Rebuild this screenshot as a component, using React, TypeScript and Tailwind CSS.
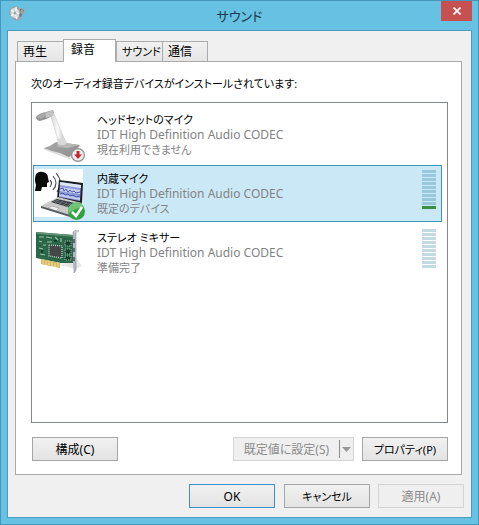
import { useState, type ReactNode } from "react";

function SpeakerIcon() {
  return (
    <svg width="16" height="16" viewBox="0 0 16 16" aria-hidden="true">
      <path d="M1 4 4 1l4-1 2 2 3 0 3 2-1 3-2 2-1 4-4 2-4-2-3-4z" fill="#9ea4a9" />
      <ellipse cx="6" cy="7" rx="5" ry="6" fill="#d4d7da" stroke="#8b9297" strokeWidth=".8" transform="rotate(-20 6 7)" />
      <path d="M2 4l4 3-4 3M7 1v5l3 2M6 8l2 5" stroke="#f7f7f7" strokeWidth="1.4" fill="none" />
      <path d="M11 3l4 1-1 2-3-1zM11 7l2 1-1 3-2-1z" fill="#6d757b" />
      <path d="M12 4.5l2 .5" stroke="#d7c0ba" />
      <circle cx="6" cy="7" r="1.500" fill="#9aa2a7" />
    </svg>
  );
}

function HeadsetMicIcon() {
  return (
    <svg width="52" height="52" viewBox="0 0 52 52" aria-hidden="true">
      <defs>
        <linearGradient id="arm" x1="0" x2="1">
          <stop offset="0" stopColor="#cfcfcf" />
          <stop offset=".5" stopColor="#fbfbfb" />
          <stop offset="1" stopColor="#b5b5b5" />
        </linearGradient>
        <linearGradient id="base" x1="0" x2="1" y2="1">
          <stop offset="0" stopColor="#a9a9a9" />
          <stop offset="1" stopColor="#8d8d8d" />
        </linearGradient>
      </defs>
      <path d="M9 38l2 2 24 9 3-1 8-12z" fill="#dedede" />
      <path d="M10 38q7-2 12-6l10 1 14 2-6 8-5 4-9-4-8-2z" fill="url(#base)" />
      <path d="M23 33l9 0 12 2-10 3-10-1z" fill="#b8b8b8" />
      <path d="M16 4l4 0 12 29q-4 3-7 0z" fill="url(#arm)" stroke="#c9c9c9" strokeWidth=".6" />
      <path d="M23 28q4 2 7-1l3 6q-4 4-9 1z" fill="#d9d9d9" />
      <path d="M2 7Q5 3 12 2l7-2 1 3-2 3Q12 10 6 11q-4-1-4-4z" fill="#929292" />
      <path d="M11 3l8-3 1 3-2 3-6 2z" fill="#c2c2c2" />
      <path d="M3 7q3-3 7-4l2 3-5 3z" fill="#aaaaaa" />
      <circle cx="44" cy="45" r="6.400" fill="#f0f0f0" stroke="#8f8f8f" strokeWidth="1.200" />
      <path d="M42.500 41h3v3.500h2.500l-4 4.500-4-4.500h2.500z" fill="#c6272f" />
    </svg>
  );
}

function LaptopMicIcon() {
  return (
    <svg width="52" height="52" viewBox="0 0 52 52" aria-hidden="true">
      <path d="M0 0h49v48H0z" fill="#fff" />
      <path d="M2 5Q5 2 9 3q5 1 5 6l1 4-2 1 0 4-5 0-1 4-6 0 1-6Q0 11 2 5z" fill="#0a0a0a" />
      <path d="M16 11q3 3 0 7M19 7q6 7 0 14M22 4q8 9 1 19" stroke="#45494c" strokeWidth="1.100" fill="none" />
      <path d="M25 11l24 3-1 21-25-6z" fill="#1b1d20" />
      <path d="M26 13l21 3-1 16-21-4z" fill="#8e9cd9" />
      <path d="M26 13l21 3v3l-21-3z" fill="#dfe6f2" />
      <path d="M26 18l20 3v4l-20-3zM25 25l21 4v2l-21-4z" fill="#c4ceef" />
      <path d="M26 20l3-1 1 3 2-2 2 3 2-2 2 2 2-1 2 2 4-1M26 25l3-1 2 2 3-1 2 2 3-1 3 2 4-1" stroke="#4d58b4" strokeWidth="1" fill="none" />
      <path d="M24 28l24 6-12 13L7 37z" fill="#c9c9c9" />
      <path d="M23 30l22 5-5 5-23-7z" fill="#303438" />
      <path d="M21 31l21 6M19 32l21 7M26 30l-5 4M30 31l-5 4M34 32l-5 5M38 33l-5 5M42 34l-4 5" stroke="#858b8f" strokeWidth=".6" />
      <path d="M18 37l7 2-3 3-8-3z" fill="#eeeeee" stroke="#888" strokeWidth=".5" />
      <path d="M7 37l29 9v2L7 39z" fill="#555b60" />
      <circle cx="42.500" cy="42.500" r="8.500" fill="#34a142" />
      <path d="M34 41a8.500 8.500 0 0116-3q-8 1-15 6z" fill="#6fc374" />
      <path d="M38 43l4 4 6-9" stroke="#fff" strokeWidth="2.600" fill="none" />
    </svg>
  );
}

function SoundCardIcon() {
  return (
    <svg width="52" height="52" viewBox="0 0 52 52" aria-hidden="true">
      <path d="M26 37l16-7 6 8-6 3z" fill="#e6e7e6" />
      <path d="M2 4l37 3v28l-12 0L2 30z" fill="#2a6647" />
      <path d="M2 4l37 3v2L3 6z" fill="#5f8f74" />
      <path d="M7 31l19 4v5L7 36z" fill="#d6b45c" />
      <path d="M9 32v4M12 33v4M15 33v4M18 34v4M21 35v4M24 35v4" stroke="#f6e5a8" />
      <path d="M15 17l13 1v12l-13-2z" fill="#414846" stroke="#b9cabf" strokeWidth="1.400" strokeDasharray="1 1" />
      <path d="M5 9h5M5 13l3 1M5 20l4 1M6 26l5 1M12 9l6 1M21 9l3 3M27 10v4M13 14h5M9 17h3" stroke="#9bc4a8" strokeWidth="1.200" />
      <path d="M31 13h6v5h-6zM31 21h6v5h-6zM31 28h6v4h-6z" fill="#173f2e" stroke="#a7c7b1" strokeDasharray="1 1" />
      <path d="M7 22h2v3H7zM20 12h3v2h-3z" fill="#133f2a" />
      <path d="M39 4l3-2v40l-2 3z" fill="#b6bbc3" stroke="#8b929a" strokeWidth=".6" />
      <path d="M40 3l5-1v2l-4 1z" fill="#c3c5ca" />
      <path d="M39 11h2v4h-2zM39 20h2v4h-2zM39 29h2v4h-2z" fill="#5e6870" />
    </svg>
  );
}

type Device = {
  name: string;
  status: string;
  icon: ReactNode;
  level: number | null;
};

const devices: Device[] = [
  { name: "ヘッドセットのマイク", status: "現在利用できません", icon: <HeadsetMicIcon />, level: null },
  { name: "内蔵マイク", status: "既定のデバイス", icon: <LaptopMicIcon />, level: 1 },
  { name: "ステレオ ミキサー", status: "準備完了", icon: <SoundCardIcon />, level: 0 },
];

const tabs = [
  { label: "再生", style: "w-[47px] text-xs" },
  { label: "録音", style: "w-[53px] text-xs" },
  { label: "サウンド", style: "w-[47px] text-[11px]" },
  { label: "通信", style: "w-[46px] text-xs" },
];

function LevelMeter({ level, selected }: { level: number; selected: boolean }) {
  const idle = selected ? "bg-[#98c8dc]" : "bg-[#c3dbe0]";
  return (
    <span className="flex w-3.5 flex-col gap-px" aria-hidden="true">
      {Array.from({ length: 10 }, (_, i) => (
        <span key={i} className={`h-[3px] ${i >= 10 - level ? "bg-[#388e43]" : idle}`} />
      ))}
    </span>
  );
}

const button =
  "h-6 w-[86px] border border-[#a5a5a5] bg-linear-to-b from-[#f1f1f1] to-[#e3e3e3] text-center whitespace-nowrap disabled:border-[#d4d4d4] disabled:from-[#efefef] disabled:to-[#efefef] disabled:text-[#8b8b8b]";

export default function App() {
  const [tab, setTab] = useState(1);
  const [selected, setSelected] = useState(1);

  return (
    <main className="flex min-h-screen flex-col border border-[#4598bb] bg-[#66c1e3] px-[6px] pb-[6px] font-['Noto_Sans','Noto_Sans_CJK_JP',sans-serif] text-xs leading-[15px] text-black [font-feature-settings:'palt']">
      <header className="flex h-[29px] items-start">
        <span className="flex w-[31px] pt-[5px] pl-0.5">
          <SpeakerIcon />
        </span>
        <h1 className="flex-1 pt-[5px] text-center text-[13px] leading-5 text-[#193b49]">サウンド</h1>
        <button aria-label="閉じる" className="flex h-5 w-[31px] items-center justify-center bg-[#c75050]">
          <svg width="8" height="8" viewBox="0 0 8 8" aria-hidden="true">
            <path d="M.5.5l7 7m0-7l-7 7" stroke="#fff" strokeWidth="1.700" />
          </svg>
        </button>
      </header>

      <div className="flex flex-1 flex-col border border-[#4c9dbd] bg-[#f0f0f0] pt-2 pr-[9px] pb-[9px] pl-[7px]">
        <div role="tablist" className="flex items-end pl-0.5">
          {tabs.map((t, i) => (
            <button
              key={t.label}
              role="tab"
              aria-selected={tab === i}
              onClick={() => setTab(i)}
              className={`border border-b-0 border-[#acacac] text-left whitespace-nowrap ${t.style} ${
                tab === i
                  ? "relative -mb-px h-[23px] bg-white pb-0.5 pl-[7px]"
                  : "-mr-px h-5 bg-linear-to-b from-[#f1f1f1] to-[#e5e5e5] pl-[5px]"
              }`}
            >
              {t.label}
            </button>
          ))}
        </div>

        <section className="flex flex-1 flex-col border border-[#a9a9a9] bg-white pr-[13px] pb-[13px] pl-[15px]">
          <h2 id="device-heading" className="pt-[14px] pb-[11px] text-[11px] leading-[15px] whitespace-nowrap">
            次のオーディオ録音デバイスがインストールされています:
          </h2>
          <div
            role="listbox"
            aria-labelledby="device-heading"
            className="flex flex-1 flex-col gap-0.5 border border-[#828790] pt-[3px] pr-[5px] pl-px"
          >
            {devices.map((d, i) => {
              const active = selected === i;
              return (
                <button
                  key={d.name}
                  role="option"
                  aria-selected={active}
                  onClick={() => setSelected(i)}
                  className={`flex h-[57px] items-start gap-[11px] border pr-[5px] text-left ${
                    active ? "border-[#3d97b6] bg-[#cbe8f6]" : "border-transparent"
                  }`}
                >
                  <span className="pt-[3px]">{d.icon}</span>
                  <span className="flex flex-1 flex-col pt-[5px] text-[#838383]">
                    <span className="text-[11px] leading-[15px] text-black">{d.name}</span>
                    <span>IDT High Definition Audio CODEC</span>
                    <span className="text-[11px] leading-[15px]">{d.status}</span>
                  </span>
                  {d.level !== null && (
                    <span className="pt-1">
                      <LevelMeter level={d.level} selected={active} />
                    </span>
                  )}
                </button>
              );
            })}
          </div>
          <div className="mt-[14px] flex pl-px">
            <button className={button}>構成(C)</button>
            <div className="mr-2 ml-auto flex h-6 w-[121px] border border-[#d4d4d4] bg-[#efefef] text-[#8b8b8b]">
              <button disabled className="flex-1 whitespace-nowrap">既定値に設定(S)</button>
              <button disabled aria-label="既定値のオプション" className="my-0.5 flex w-3.5 items-center justify-center border-l border-[#8b8b8b]">
                <svg width="9" height="5" viewBox="0 0 9 5" aria-hidden="true">
                  <path d="M0 0h9L4.500 5z" fill="#999" />
                </svg>
              </button>
            </div>
            <button className={`${button} text-[11px]`}>プロパティ(P)</button>
          </div>
        </section>

        <footer className="-mr-0.5 flex justify-end gap-2 pt-[9px]">
          <button className="h-6 w-[86px] border border-[#3c8fc7] bg-linear-to-b from-[#f1f1f1] to-[#e3e3e3]">OK</button>
          <button className={`${button} ml-px text-[11px]`}>キャンセル</button>
          <button disabled className={button}>適用(A)</button>
        </footer>
      </div>
    </main>
  );
}
